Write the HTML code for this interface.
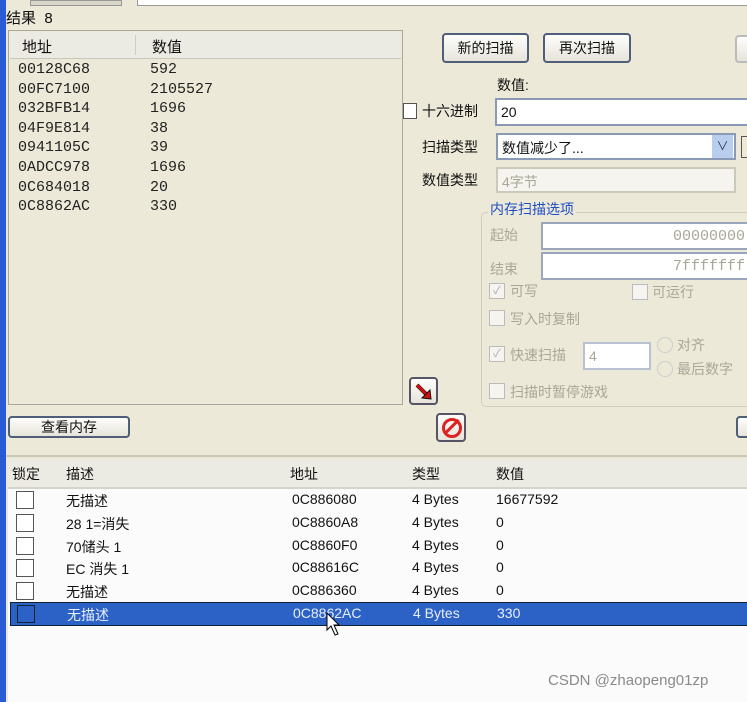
<!DOCTYPE html>
<html><head><meta charset="utf-8"><style>
body{margin:0;width:747px;height:702px;overflow:hidden;background:#ece9d8;font-family:"Liberation Sans","Noto Sans CJK SC",sans-serif;font-size:14px;color:#111;position:relative}
.a{position:absolute}
.btn{position:absolute;border:2px solid #4f5f7a;border-radius:4px;background:linear-gradient(#fdfdfb,#e6e4da);text-align:center;box-sizing:border-box;font-size:14px}
.inp{position:absolute;background:#fff;border:2px solid #8a9ab5;box-sizing:border-box}
.dis{color:#a9a797}
.cb{position:absolute;width:14px;height:14px;border:1px solid #bbb;background:#f5f4ee}
.mono{font-family:"Liberation Mono",monospace;font-size:15px;line-height:19.6px}
.row{position:absolute;left:10px;width:737px;height:22px;font-size:14px}
.row span{position:absolute;top:2px}
.row .c{left:6px;top:2px;width:18px;height:18px;border:1.5px solid #555;background:#fff;box-sizing:border-box}
</style></head><body>
<div class="a" style="left:0;top:0;width:6px;height:702px;background:#2a5bd6"></div>
<div class="a" style="left:30px;top:0;width:90px;height:4px;background:#d9d7ca;border:1px solid #999"></div>
<div class="a" style="left:137px;top:-2px;width:610px;height:6px;background:#fff;border:1px solid #999"></div>
<div class="a" style="left:6px;top:7px;font-size:15px">结果 &nbsp;8</div>
<div class="a" style="left:8px;top:30px;width:395px;height:375px;background:#ece9d8;border:1px solid #a8a7a0;box-sizing:border-box"></div>
<div class="a" style="left:10px;top:32px;width:391px;height:26px;border-bottom:1px solid #c8c6bb;background:#ecebe3"></div>
<div class="a" style="left:135px;top:35px;width:1px;height:20px;background:#ccc"></div>
<div class="a" style="left:22px;top:36px;font-size:15px">地址</div>
<div class="a" style="left:152px;top:36px;font-size:15px">数值</div>
<div class="a mono" style="left:18px;top:60px;color:#222">00128C68<br>00FC7100<br>032BFB14<br>04F9E814<br>0941105C<br>0ADCC978<br>0C684018<br>0C8862AC</div>
<div class="a mono" style="left:150px;top:60px;color:#222">592<br>2105527<br>1696<br>38<br>39<br>1696<br>20<br>330</div>
<div class="btn" style="left:442px;top:33px;width:87px;height:30px;line-height:26px">新的扫描</div>
<div class="btn" style="left:543px;top:33px;width:88px;height:30px;line-height:26px">再次扫描</div>
<div class="btn" style="left:735px;top:35px;width:20px;height:28px;border-color:#bbb"></div>
<div class="a" style="left:497px;top:75px">数值:</div>
<div class="a" style="left:403px;top:103px;width:12px;height:14px;border:1px solid #555;background:#fff"></div>
<div class="a" style="left:422px;top:101px">十六进制</div>
<div class="inp" style="left:495px;top:98px;width:260px;height:28px;padding:4px 4px;font-size:14px">20</div>
<div class="a" style="left:422px;top:137px">扫描类型</div>
<div class="inp" style="left:496px;top:133px;width:240px;height:27px;padding:3px 4px;border-color:#8a9ab5">数值减少了...</div>
<div class="a" style="left:712px;top:135px;width:21px;height:23px;background:#b9cdef;color:#335;text-align:center;font-size:12px;line-height:23px">&#8744;</div>
<div class="a" style="left:741px;top:136px;width:10px;height:20px;border:1px solid #555"></div>
<div class="a" style="left:422px;top:170px">数值类型</div>
<div class="inp dis" style="left:496px;top:167px;width:240px;height:26px;padding:3px 4px;border-color:#ccc9bb;background:#f5f4ee">4字节</div>
<div class="a" style="left:481px;top:212px;width:280px;height:193px;border:1px solid #d0cebf;border-radius:5px"></div>
<div class="a" style="left:488px;top:199px;background:#ece9d8;color:#1f4fc4;padding:0 2px">内存扫描选项</div>
<div class="a dis" style="left:490px;top:225px">起始</div>
<div class="inp dis mono" style="left:541px;top:222px;width:220px;height:28px;text-align:right;padding:3px 14px 0 0;border-color:#9aa6bb">00000000</div>
<div class="a dis" style="left:490px;top:259px">结束</div>
<div class="inp dis mono" style="left:541px;top:252px;width:220px;height:28px;text-align:right;padding:3px 14px 0 0;border-color:#9aa6bb">7fffffff</div>
<div class="cb" style="left:489px;top:283px;font-size:11px;color:#aaa;line-height:14px;text-align:center">✓</div>
<div class="a dis" style="left:510px;top:281px">可写</div>
<div class="cb" style="left:632px;top:284px"></div>
<div class="a dis" style="left:652px;top:282px">可运行</div>
<div class="cb" style="left:489px;top:310px"></div>
<div class="a dis" style="left:510px;top:309px">写入时复制</div>
<div class="cb" style="left:489px;top:346px;font-size:11px;color:#aaa;line-height:14px;text-align:center">✓</div>
<div class="a dis" style="left:510px;top:345px">快速扫描</div>
<div class="inp dis" style="left:583px;top:342px;width:68px;height:28px;padding:4px;border-color:#b9c2d3">4</div>
<div class="a" style="left:657px;top:337px;width:14px;height:14px;border-radius:50%;border:1px solid #ccc"></div>
<div class="a dis" style="left:677px;top:335px">对齐</div>
<div class="a" style="left:657px;top:361px;width:14px;height:14px;border-radius:50%;border:1px solid #ccc"></div>
<div class="a dis" style="left:677px;top:359px">最后数字</div>
<div class="cb" style="left:489px;top:383px"></div>
<div class="a dis" style="left:510px;top:382px">扫描时暂停游戏</div>
<div class="btn" style="left:409px;top:377px;width:29px;height:28px;border-color:#556"><svg class="a" style="left:3px;top:3px" width="20" height="20"><path d="M3 3 L15 15" stroke="#111" stroke-width="4"/><path d="M3 3 L14 14" stroke="#d01010" stroke-width="3"/><path d="M17 17 L8 16 L16 8 Z" fill="#d01010" stroke="#111" stroke-width="1"/></svg></div>
<div class="btn" style="left:8px;top:416px;width:122px;height:22px;line-height:18px">查看内存</div>
<div class="btn" style="left:436px;top:413px;width:30px;height:29px;border-color:#556"><div class="a" style="left:4px;top:3px;width:14px;height:14px;border:3px solid #d22;border-radius:50%"></div><div class="a" style="left:12px;top:2px;width:3px;height:20px;background:#d22;transform:rotate(45deg)"></div></div>
<div class="btn" style="left:736px;top:416px;width:20px;height:22px"></div>
<div class="a" style="left:6px;top:455px;width:741px;height:2px;background:#c9c7ba"></div>
<div class="a" style="left:8px;top:459px;width:739px;height:28px;background:#ecebe3;border-bottom:2px solid #d6d4c8"></div>
<div class="a" style="left:12px;top:464px">锁定</div>
<div class="a" style="left:66px;top:464px">描述</div>
<div class="a" style="left:290px;top:464px">地址</div>
<div class="a" style="left:412px;top:464px">类型</div>
<div class="a" style="left:496px;top:464px">数值</div>
<div class="a" style="left:8px;top:489px;width:739px;height:213px;background:#fbfbfb"></div>
<div class="row" style="top:489px"><div class="a c"></div><span style="left:56px">无描述</span><span style="left:282px">0C886080</span><span style="left:402px">4 Bytes</span><span style="left:486px">16677592</span></div>
<div class="row" style="top:512px"><div class="a c"></div><span style="left:56px">28 1=消失</span><span style="left:282px">0C8860A8</span><span style="left:402px">4 Bytes</span><span style="left:486px">0</span></div>
<div class="row" style="top:535px"><div class="a c"></div><span style="left:56px">70储头 1</span><span style="left:282px">0C8860F0</span><span style="left:402px">4 Bytes</span><span style="left:486px">0</span></div>
<div class="row" style="top:557px"><div class="a c"></div><span style="left:56px">EC 消失 1</span><span style="left:282px">0C88616C</span><span style="left:402px">4 Bytes</span><span style="left:486px">0</span></div>
<div class="row" style="top:580px"><div class="a c"></div><span style="left:56px">无描述</span><span style="left:282px">0C886360</span><span style="left:402px">4 Bytes</span><span style="left:486px">0</span></div>
<div class="row" style="top:602px;background:#2c62c6;color:#e8eeff;border:1px solid #123"><div class="a c" style="background:#2c62c6;border-color:#123"></div><span style="left:56px">无描述</span><span style="left:282px">0C8862AC</span><span style="left:402px">4 Bytes</span><span style="left:486px">330</span></div>
<svg class="a" style="left:326px;top:612px" width="16" height="26"><path d="M1 1 L1 18 L5 14 L9 23 L12 22 L8 13 L13 13 Z" fill="#fff" stroke="#000"/></svg>
<div class="a" style="left:548px;top:672px;color:#8a8a8a;font-size:15px">CSDN @zhaopeng01zp</div>
</body></html>
